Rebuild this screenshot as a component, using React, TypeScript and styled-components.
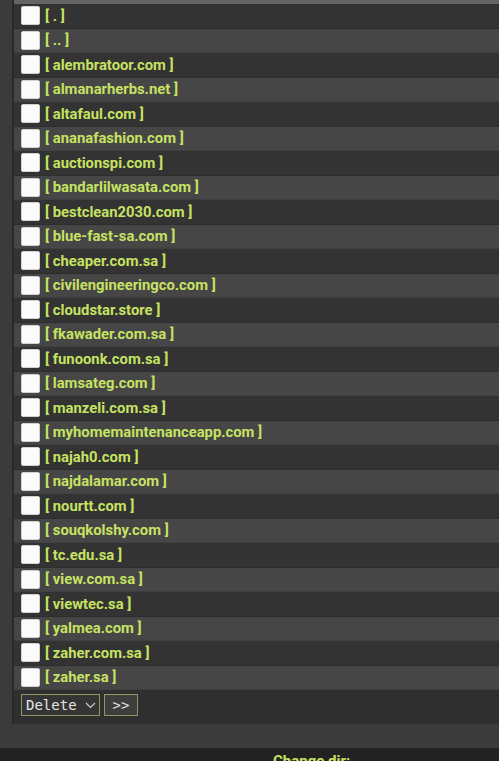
import React from 'react';
import styled, { createGlobalStyle } from 'styled-components';

const GlobalStyle = createGlobalStyle`
  html, body {
    margin: 0;
    padding: 0;
    background: #3b3b3b;
    font-family: Roboto, 'Liberation Sans', sans-serif;
  }
`;

const Page = styled.div`
  width: 499px;
  height: 761px;
  overflow: hidden;
`;

const Wrap = styled.div`
  padding-left: 12px;
`;

const Panel = styled.div`
  background: #2f2f2f;
  border-left: 2px solid #292929;
  padding-bottom: 8px;
`;

const HeadStrip = styled.div`
  height: 4px;
  background: #646464;
`;

const Row = styled.div<{ $alt: boolean }>`
  height: 24.5px;
  box-sizing: border-box;
  display: flex;
  align-items: center;
  gap: 5px;
  padding-left: 7px;
  background: ${(p) => (p.$alt ? '#464646' : '#333333')};
  border-bottom: 1px solid ${(p) => (p.$alt ? '#404040' : '#2d2d2d')};
`;

const Check = styled.span`
  width: 19px;
  height: 19px;
  box-sizing: border-box;
  background: #fbfbfb;
  border: 1px solid #d2d2d2;
  border-radius: 2px;
  flex: none;
`;

const Name = styled.a`
  color: #c6e262;
  font-weight: 700;
  font-size: 14.8px;
  text-decoration: none;
  white-space: nowrap;
`;

const Actions = styled.div`
  display: flex;
  gap: 4px;
  padding: 4px 0 0 7px;
`;

const Select = styled.div`
  width: 79px;
  height: 22px;
  box-sizing: border-box;
  border: 1px solid #8c9a62;
  background: #353535;
  color: #e4e4e4;
  font-family: 'DejaVu Sans Mono', 'Liberation Mono', monospace;
  font-size: 14px;
  display: flex;
  align-items: center;
  justify-content: space-between;
  padding: 0 3px 0 4px;
`;

const Button = styled.div`
  width: 34px;
  height: 22px;
  box-sizing: border-box;
  border: 1px solid #8c9a62;
  background: #3e3e3e;
  color: #e4e4e4;
  font-family: 'DejaVu Sans Mono', 'Liberation Mono', monospace;
  font-size: 14px;
  display: flex;
  align-items: center;
  justify-content: center;
`;

const Gap = styled.div`
  height: 24px;
`;

const Footer = styled.div`
  height: 40px;
  background: #222222;
  padding: 4px 0 0 273px;
  color: #c6e262;
  font-weight: 700;
  font-size: 15px;
`;

const names = [
  '.',
  '..',
  'alembratoor.com',
  'almanarherbs.net',
  'altafaul.com',
  'ananafashion.com',
  'auctionspi.com',
  'bandarlilwasata.com',
  'bestclean2030.com',
  'blue-fast-sa.com',
  'cheaper.com.sa',
  'civilengineeringco.com',
  'cloudstar.store',
  'fkawader.com.sa',
  'funoonk.com.sa',
  'lamsateg.com',
  'manzeli.com.sa',
  'myhomemaintenanceapp.com',
  'najah0.com',
  'najdalamar.com',
  'nourtt.com',
  'souqkolshy.com',
  'tc.edu.sa',
  'view.com.sa',
  'viewtec.sa',
  'yalmea.com',
  'zaher.com.sa',
  'zaher.sa',
];

export default function App() {
  return (
    <Page>
      <GlobalStyle />
      <Wrap>
        <Panel>
          <HeadStrip />
          {names.map((n, i) => (
            <Row key={n} $alt={i % 2 === 1}>
              <Check />
              <Name href="#">[ {n} ]</Name>
            </Row>
          ))}
          <Actions>
            <Select>
              Delete
              <svg width="11" height="7" viewBox="0 0 11 7">
                <path d="M1 1l4.5 4.5L10 1" fill="none" stroke="#cfcfcf" strokeWidth="1.1" />
              </svg>
            </Select>
            <Button>&gt;&gt;</Button>
          </Actions>
        </Panel>
      </Wrap>
      <Gap />
      <Footer>Change dir:</Footer>
    </Page>
  );
}
